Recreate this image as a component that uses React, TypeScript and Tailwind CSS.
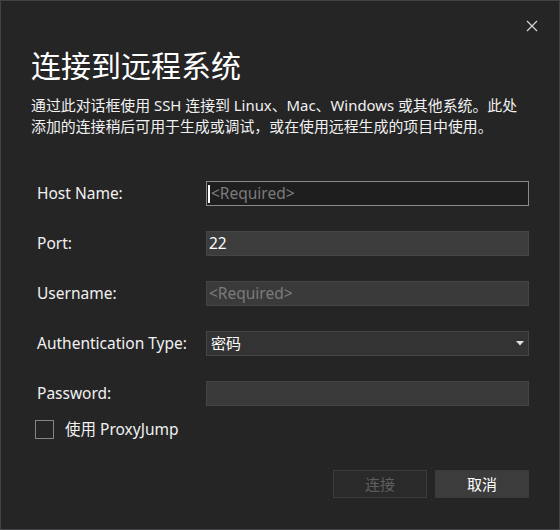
import React from "react";

const font = { fontFamily: '"Noto Sans", "Noto Sans CJK SC", sans-serif' };

export default function App() {
  return (
    <div
      className="w-[560px] h-[530px] bg-[#252526] border border-[#434346] flex flex-col text-[#f1f1f1] box-border"
      style={font}
    >
      <div className="h-[45px] flex justify-end items-start pt-[19px] pr-[21px]">
        <svg width="12" height="12" viewBox="0 0 12 12">
          <path d="M1 1 L11 11 M11 1 L1 11" stroke="#d6d6d6" strokeWidth="1.2" />
        </svg>
      </div>
      <div className="pl-[30px] text-[30px] leading-[40px] text-white">连接到远程系统</div>
      <div className="pl-[30px] pr-[20px] mt-[9px] text-[14.9px] leading-[21px] text-[#f1f1f1] whitespace-nowrap">
        <div>通过此对话框使用 SSH 连接到 Linux、Mac、Windows 或其他系统。此处</div>
        <div>添加的连接稍后可用于生成或调试，或在使用远程生成的项目中使用。</div>
      </div>
      <div className="mt-[44px] pl-[36px] pr-[30px] flex flex-col gap-[25px] text-[15.5px]">
        <div className="flex items-center h-[25px]">
          <div className="w-[169px] shrink-0">Host Name:</div>
          <div className="flex-1 h-[25px] bg-[#1e1e1e] border border-[#8a8a8a] flex items-center pl-[1px] text-[#7b7b7b]">
            <span className="w-[2px] h-[18px] bg-white mr-[1px]" />
            &lt;Required&gt;
          </div>
        </div>
        <div className="flex items-center h-[25px]">
          <div className="w-[169px] shrink-0">Port:</div>
          <div className="flex-1 h-[25px] bg-[#3c3c3c] border border-[#464646] flex items-center pl-[2px] text-white">
            22
          </div>
        </div>
        <div className="flex items-center h-[25px]">
          <div className="w-[169px] shrink-0">Username:</div>
          <div className="flex-1 h-[25px] bg-[#3a3a3a] border border-[#454545] flex items-center pl-[2px] text-[#7b7b7b]">
            &lt;Required&gt;
          </div>
        </div>
        <div className="flex items-center h-[25px]">
          <div className="w-[169px] shrink-0">Authentication Type:</div>
          <div className="flex-1 h-[25px] bg-[#333333] border border-[#464646] flex items-center justify-between pl-[4px] pr-[4px] text-white">
            <span className="text-[15px]">密码</span>
            <svg width="8" height="5" viewBox="0 0 8 5">
              <path d="M0 0 H8 L4 4.5 Z" fill="#e0e0e0" />
            </svg>
          </div>
        </div>
        <div className="flex items-center h-[25px]">
          <div className="w-[169px] shrink-0">Password:</div>
          <div className="flex-1 h-[25px] bg-[#3a3a3a] border border-[#454545]" />
        </div>
      </div>
      <div className="mt-[14px] h-[19px] pl-[34px] flex items-center gap-[11px] text-[15.5px]">
        <div className="w-[19px] h-[19px] border border-[#858585]" />
        <span>使用 ProxyJump</span>
      </div>
      <div className="mt-[31px] pr-[30px] flex justify-end gap-[8px] text-[15px]">
        <div className="w-[94px] h-[28px] bg-[#2a2a2a] border border-[#3d3d3d] flex items-center justify-center text-[#5e5e5e]">
          连接
        </div>
        <div className="w-[94px] h-[28px] bg-[#3c3c3c] flex items-center justify-center text-white">
          取消
        </div>
      </div>
    </div>
  );
}
